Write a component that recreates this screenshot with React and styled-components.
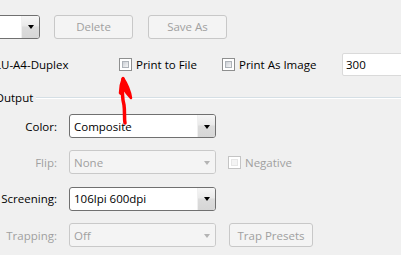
import React from "react";
import styled, { createGlobalStyle } from "styled-components";

const Global = createGlobalStyle`
  html, body { margin: 0; padding: 0; background: #f0f0f0; }
  body { font-family: "Open Sans", "Noto Sans", sans-serif; font-size: 11.5px; color: #000; }
`;

const Stage = styled.div`
  position: relative;
  width: 401px;
  height: 255px;
  overflow: hidden;
  background: #f0f0f0;
`;

const TopRow = styled.div`
  display: flex;
  align-items: center;
  height: 25px;
  margin-top: 14px;
`;

const Combo = styled.div`
  display: flex;
  align-items: stretch;
  box-sizing: border-box;
  width: ${(p) => p.$w}px;
  height: ${(p) => p.$h || 24}px;
  margin-left: ${(p) => p.$ml || 0}px;
  border: 1px solid ${(p) => (p.$disabled ? "#c9c9c9" : "#707070")};
  border-radius: 3px;
  background: ${(p) => (p.$disabled ? "#f4f4f4" : "#fff")};
  color: ${(p) => (p.$disabled ? "#a0a0a0" : "#000")};
  overflow: hidden;
`;

const ComboText = styled.div`
  flex: 1;
  display: flex;
  align-items: center;
  padding-left: 4px;
  white-space: nowrap;
`;

const ComboButton = styled.div`
  width: 17px;
  display: flex;
  align-items: center;
  justify-content: center;
  background: ${(p) =>
    p.$disabled
      ? "#f4f4f4"
      : "linear-gradient(to bottom, #f6f6f6 0%, #eaeaea 45%, #dcdcdc 50%, #d6d6d6 100%)"};
  border-left: ${(p) => (p.$disabled ? "none" : "1px solid #f0f0f0")};
`;

const Tri = styled.div`
  width: 0;
  height: 0;
  border-left: 3.5px solid transparent;
  border-right: 3.5px solid transparent;
  border-top: 4px solid ${(p) => (p.$disabled ? "#b4b4b4" : "#000")};
  margin-top: 1px;
`;

const Button = styled.div`
  box-sizing: border-box;
  width: ${(p) => p.$w}px;
  height: 24px;
  margin-left: ${(p) => p.$ml || 0}px;
  display: flex;
  align-items: center;
  justify-content: center;
  border: 1px solid #c8c8c8;
  border-radius: 3px;
  background: #f4f4f4;
  color: #a0a0a0;
  white-space: nowrap;
`;

const SecondRow = styled.div`
  display: flex;
  align-items: center;
  height: 23px;
  margin-top: 14px;
`;

const Plain = styled.span`
  white-space: nowrap;
  width: ${(p) => p.$w}px;
  margin-left: ${(p) => p.$ml || 0}px;
  flex: none;
  color: ${(p) => (p.$disabled ? "#a0a0a0" : "#000")};
`;

const Check = styled.label`
  display: flex;
  align-items: center;
  gap: 4px;
  margin-left: ${(p) => p.$ml || 0}px;
  width: ${(p) => (p.$w ? p.$w + "px" : "auto")};
  flex: none;
  white-space: nowrap;
  color: ${(p) => (p.$disabled ? "#a0a0a0" : "#000")};
`;

const Box = styled.span`
  box-sizing: border-box;
  width: 13px;
  height: 13px;
  border: 1px solid ${(p) => (p.$disabled ? "#c4c4c4" : "#8e8f8f")};
  background: #fff;
  padding: 2px;
  display: flex;
  &::after {
    content: "";
    flex: 1;
    background: ${(p) =>
      p.$disabled ? "#f4f4f4" : "linear-gradient(135deg, #cbcfd5 0%, #f6f6f6 100%)"};
    border: 1px solid ${(p) => (p.$disabled ? "#e6e6e6" : "#aeb3b9")};
  }
`;

const Field = styled.div`
  box-sizing: border-box;
  height: 23px;
  width: 80px;
  flex: none;
  display: flex;
  align-items: center;
  justify-content: space-between;
  padding: 0 3px;
  background: #fff;
  border: 1px solid #dadada;
  border-radius: 2px;
`;

const Group = styled.div`
  display: flex;
  align-items: center;
  gap: 3px;
  margin-top: 11px;
  margin-left: -5px;
  height: 20px;
  &::after {
    content: "";
    flex: 1;
    height: 1px;
    background: #d5dfe5;
    box-shadow: 0 1px 0 #fff;
  }
`;

const Form = styled.div`
  display: grid;
  grid-template-columns: 57px 147px auto;
  grid-auto-rows: 24px;
  column-gap: 12px;
  row-gap: 12.4px;
  margin-top: 7px;
  align-items: center;
`;

const Label = styled.div`
  text-align: right;
  white-space: nowrap;
  color: ${(p) => (p.$disabled ? "#a0a0a0" : "#000")};
`;

const Slot = styled.div`
  display: flex;
  align-items: center;
`;

const Arrow = styled.svg`
  position: absolute;
  left: 112px;
  top: 74px;
  width: 26px;
  height: 52px;
  pointer-events: none;
`;

function Select({ value, disabled, w = 147, h, ml }) {
  return (
    <Combo $w={w} $h={h} $ml={ml} $disabled={disabled}>
      <ComboText>{value}</ComboText>
      <ComboButton $disabled={disabled}>
        <Tri $disabled={disabled} />
      </ComboButton>
    </Combo>
  );
}

export default function App() {
  return (
    <>
      <Global />
      <Stage>
        <TopRow>
          <Select value="" w={140} h={24} ml={-100} />
          <Button $w={79} $ml={14}>Delete</Button>
          <Button $w={79} $ml={15}>Save As</Button>
        </TopRow>
        <SecondRow>
          <Plain $w={124} $ml={-5}>LU-A4-Duplex</Plain>
          <Check $w={103}>
            <Box />
            Print to File
          </Check>
          <Check $w={120}>
            <Box />
            Print As Image
          </Check>
          <Field>
            <span>300</span>
            <Tri />
          </Field>
        </SecondRow>
        <Group>Output</Group>
        <Form>
          <Label>Color:</Label>
          <Select value="Composite" />
          <Slot />

          <Label $disabled>Flip:</Label>
          <Select value="None" disabled />
          <Slot>
            <Check $disabled>
              <Box $disabled />
              Negative
            </Check>
          </Slot>

          <Label>Screening:</Label>
          <Select value="106lpi 600dpi" />
          <Slot />

          <Label $disabled>Trapping:</Label>
          <Select value="Off" disabled />
          <Slot>
            <Button $w={84} $ml={1}>Trap Presets</Button>
          </Slot>
        </Form>
        <Arrow viewBox="0 0 26 52">
          <path
            d="M11 5 C 10 16, 10 24, 12 31 C 13 38, 12 44, 13 49"
            fill="none"
            stroke="#f00"
            strokeWidth="3.5"
            strokeLinecap="round"
          />
          <path
            d="M11 4 C 9 9, 8 14, 8 19 C 9 21, 11 18, 12 15 C 14 19, 17 22, 19 24 C 18 17, 15 10, 11 4 Z"
            fill="#f00"
            stroke="#f00"
            strokeWidth="2.5"
            strokeLinejoin="round"
          />
        </Arrow>
      </Stage>
    </>
  );
}
